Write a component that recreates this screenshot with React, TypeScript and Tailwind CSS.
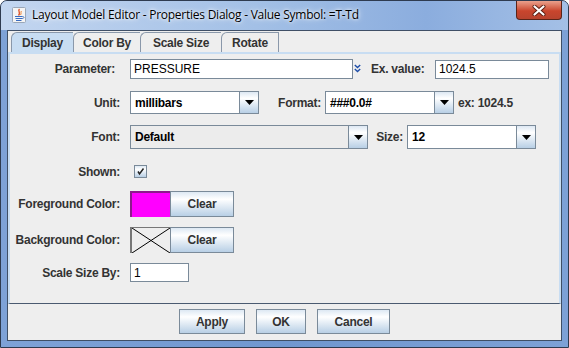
import React from "react";

const label = "font-['Liberation_Sans',Arial,sans-serif] text-[12px] font-bold tracking-[-0.25px] text-[#333333]";
const metalGrad = "bg-linear-to-b from-[#dde8f3] via-white via-30% to-[#b8cfe5]";

function ArrowButton() {
  return (
    <div className={`flex w-[19px] items-center justify-center border-l border-[#7a8a99] ${metalGrad}`}>
      <svg width="9" height="5" viewBox="0 0 9 5">
        <path d="M0 0 L9 0 L4.5 5 Z" fill="#000" />
      </svg>
    </div>
  );
}

function Combo({ value, className, gray }: { value: string; className: string; gray?: boolean }) {
  return (
    <div className={`flex h-full border border-[#7a8a99] ${className}`}>
      <div
        className={`flex flex-1 items-center pl-[4px] font-['Liberation_Sans',Arial,sans-serif] text-[12px] font-bold tracking-[-0.25px] text-black ${
          gray ? "bg-[#ececec]" : "bg-white"
        }`}
      >
        {value}
      </div>
      <ArrowButton />
    </div>
  );
}

function Field({ value, className }: { value: string; className: string }) {
  return (
    <div
      className={`flex items-center border border-[#7a8a99] bg-white pl-[3px] font-['Liberation_Sans',Arial,sans-serif] text-[12px] text-black ${className}`}
    >
      {value}
    </div>
  );
}

function MetalButton({ children, className }: { children: React.ReactNode; className: string }) {
  return (
    <div className={`flex items-center justify-center border border-[#7a8a99] ${metalGrad} ${label} ${className}`}>
      {children}
    </div>
  );
}

const tabs = [
  { name: "Display", w: "w-[62px]", active: true },
  { name: "Color By", w: "w-[67px]" },
  { name: "Scale Size", w: "w-[81px]" },
  { name: "Rotate", w: "w-[58px] border-r" },
];

export default function App() {
  return (
    <div className="h-[348px] w-[569px] bg-white">
      <div className="flex h-full w-full flex-col overflow-hidden rounded-t-[7px] border border-[#2e3b50] bg-[linear-gradient(to_right,#7ea2d7,#7097d0_50%,#7da1d6)]">
        {/* Title bar */}
        <div className="flex h-[29px] items-start bg-[linear-gradient(to_right,#c3d6f0,#a3c0e6_45%,#8badde_75%,#a4c0e6)]">
          <div className="ml-[11px] mt-[6px]">
            <svg width="14" height="16" viewBox="0 0 14 16">
              <rect x="0.5" y="0.5" width="13" height="15" rx="1" fill="#f4f4f4" stroke="#9aa7b8" />
              <path d="M7.5 2 C5 4 9.5 5 6.5 8.5" stroke="#e0562a" strokeWidth="1.4" fill="none" />
              <path d="M9.5 4 C8 5.5 10 6 8.5 8" stroke="#f08a3a" strokeWidth="1" fill="none" />
              <path d="M3 9.5 H10.5 M3.5 11.5 H10 M4 13.5 H9.5" stroke="#3a6cc0" strokeWidth="1" />
              <path d="M10.5 9.5 C12.5 9.5 12.5 11.5 10 11.5" stroke="#3a6cc0" strokeWidth="0.9" fill="none" />
            </svg>
          </div>
          <div className="ml-[6px] mt-[6px] font-['Open_Sans',sans-serif] text-[12px] leading-[16px] tracking-[-0.25px] text-black [text-shadow:0_0_6px_#ffffff,0_0_3px_#ffffff]">
            Layout Model Editor - Properties Dialog - Value Symbol: =T-Td
          </div>
          <div className="ml-auto mr-[6px] flex h-[19px] w-[46px] items-center justify-center rounded-b-[4px] border border-t-0 border-[#5a2418] bg-linear-to-b from-[#e9a08c] via-[#c9452d] via-55% to-[#b8432e]">
            <svg width="14" height="11" viewBox="0 0 14 11">
              <path d="M2.5 1.5 L11.5 9.5 M11.5 1.5 L2.5 9.5" stroke="#5b1e12" strokeWidth="4" strokeLinecap="round" />
              <path d="M2.5 1.5 L11.5 9.5 M11.5 1.5 L2.5 9.5" stroke="#ffffff" strokeWidth="2.2" strokeLinecap="round" />
            </svg>
          </div>
        </div>

        {/* Content pane */}
        <div className="mx-[6px] flex h-[311px] flex-col border border-[#3f4f66] bg-[#eeeeee]">
          {/* Tabs */}
          <div className="flex h-[21px] pl-[3px] pt-[1px]">
            {tabs.map((t) => (
              <div
                key={t.name}
                className={`flex h-[20px] items-center justify-center rounded-tl-[6px] border-l border-t border-[#8a98aa] ${label} ${t.w} ${
                  t.active ? "bg-[#c8ddf2]" : "bg-[#eeeeee]"
                }`}
              >
                {t.name}
              </div>
            ))}
          </div>

          {/* Tab panel */}
          <div className="flex h-[252px] flex-col border-x-2 border-t-2 border-b border-x-[#c8ddf2] border-t-[#c8ddf2] border-b-[#4a5a70]">
            {/* Parameter */}
            <div className="mt-[5px] flex h-[20px] items-center">
              <div className={`w-[110px] pr-[5px] text-right ${label}`}>Parameter:</div>
              <Field value="PRESSURE" className="ml-[10px] h-[20px] w-[223px]" />
              <svg className="ml-[1px]" width="7" height="10" viewBox="0 0 7 10">
                <path d="M0.8 1 L3.5 3.6 L6.2 1 M0.8 5 L3.5 7.6 L6.2 5" stroke="#1e4ea8" strokeWidth="1.4" fill="none" />
              </svg>
              <div className={`ml-[10px] w-[64px] ${label}`}>Ex. value:</div>
              <Field value="1024.5" className="h-[19px] w-[114px]" />
            </div>

            {/* Unit / Format */}
            <div className="mt-[12px] flex h-[23px] items-center">
              <div className={`w-[110px] text-right ${label}`}>Unit:</div>
              <Combo value="millibars" className="ml-[10px] w-[129px]" />
              <div className={`w-[62px] text-right ${label}`}>Format:</div>
              <Combo value="###0.0#" className="ml-[4px] w-[129px]" />
              <div className={`ml-[4px] ${label}`}>ex: 1024.5</div>
            </div>

            {/* Font / Size */}
            <div className="mt-[11px] flex h-[24px] items-center">
              <div className={`w-[110px] text-right ${label}`}>Font:</div>
              <Combo value="Default" gray className="ml-[10px] w-[238px]" />
              <div className={`w-[35px] text-right ${label}`}>Size:</div>
              <Combo value="12" className="ml-[4px] w-[129px]" />
            </div>

            {/* Shown */}
            <div className="mt-[16px] flex h-[13px] items-center">
              <div className={`w-[110px] text-right ${label}`}>Shown:</div>
              <div className={`ml-[14px] flex h-[13px] w-[13px] items-center justify-center border border-[#7a8a99] ${metalGrad}`}>
                <svg width="9" height="9" viewBox="0 0 9 9">
                  <path d="M2 4.5 L3.5 7 L7.5 1.5" stroke="#222" strokeWidth="1.5" fill="none" />
                </svg>
              </div>
            </div>

            {/* Foreground */}
            <div className="mt-[13px] flex h-[26px] items-center">
              <div className={`w-[110px] text-right ${label}`}>Foreground Color:</div>
              <div className="ml-[10px] h-[26px] w-[40px] border-l-2 border-t-2 border-[#8c1a8c] bg-[#ff00ff]" />
              <MetalButton className="h-[26px] w-[64px]">Clear</MetalButton>
            </div>

            {/* Background */}
            <div className="mt-[10px] flex h-[26px] items-center">
              <div className={`w-[110px] text-right ${label}`}>Background Color:</div>
              <div className="ml-[10px] h-[26px] w-[40px] border-l-2 border-t border-[#777777] bg-[#eeeeee]">
                <svg width="38" height="25" viewBox="0 0 38 25" className="block">
                  <path d="M0 0 L38 25 M38 0 L0 25" stroke="#000" strokeWidth="1" />
                </svg>
              </div>
              <MetalButton className="h-[26px] w-[64px]">Clear</MetalButton>
            </div>

            {/* Scale Size By */}
            <div className="mt-[10px] flex h-[19px] items-center">
              <div className={`w-[110px] text-right ${label}`}>Scale Size By:</div>
              <Field value="1" className="ml-[10px] h-[19px] w-[59px]" />
            </div>
          </div>

          {/* Buttons */}
          <div className="flex h-[36px] justify-center gap-[11px] pt-[5px]">
            <MetalButton className="h-[25px] w-[66px]">Apply</MetalButton>
            <MetalButton className="h-[25px] w-[50px]">OK</MetalButton>
            <MetalButton className="h-[25px] w-[73px]">Cancel</MetalButton>
          </div>
        </div>
      </div>
    </div>
  );
}
